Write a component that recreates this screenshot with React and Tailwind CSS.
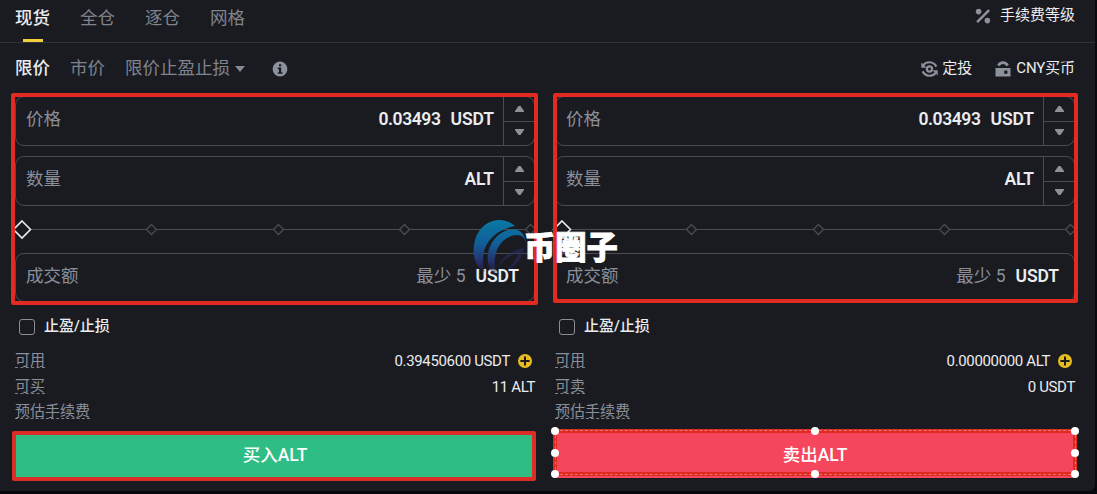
import { useState } from "react";

const tabs = ["现货", "全仓", "逐仓", "网格"];

const sides = [
  {
    id: "buy",
    price: "0.03493",
    available: "0.39450600 USDT",
    maxLabel: "可买",
    max: "11 ALT",
    action: "买入ALT",
  },
  {
    id: "sell",
    price: "0.03493",
    available: "0.00000000 ALT",
    maxLabel: "可卖",
    max: "0 USDT",
    action: "卖出ALT",
  },
];

function PercentIcon() {
  return (
    <svg width="16" height="16" viewBox="0 0 16 16" fill="#8b919d">
      <circle cx="3.6" cy="3.6" r="2.8" />
      <circle cx="12.4" cy="12.6" r="2.8" />
      <path d="M13.2 1.2 15 3 3 15 1.2 13.2z" />
    </svg>
  );
}

function CycleIcon() {
  return (
    <svg className="mt-[2px]" width="17" height="18" viewBox="0 0 17 18" fill="none" stroke="#8b919d">
      <circle cx="8.5" cy="9" r="2.6" strokeWidth="2.2" />
      <path d="M2.4 5C5.5 1.2 12.2 1 15.4 6.6" strokeWidth="2.2" />
      <path d="M14.6 13C11.5 16.8 4.8 17 1.6 11.4" strokeWidth="2.2" />
      <path d="M.3 2.6v5.2h5.2zM16.7 15.4v-5.2h-5.2z" fill="#8b919d" stroke="none" />
    </svg>
  );
}

function BagIcon() {
  return (
    <svg className="mt-[2px]" width="16" height="16" viewBox="0 0 16 16">
      <path d="M3.4 4.6C5.4.6 10.6.6 12.6 4.6" fill="none" stroke="#8b919d" strokeWidth="2.8" />
      <path d="M.5 7h15v8.5H.5z" fill="#8b919d" />
      <path d="M9.2 9.6h3.2v3.2H9.2z" fill="#1a1b20" />
    </svg>
  );
}

function InfoIcon() {
  return (
    <svg className="mt-[2px]" width="16" height="16" viewBox="0 0 16 16">
      <circle cx="8" cy="8" r="7.4" fill="#8b919d" />
      <path d="M7 3.2h2.2v2H7zM5.8 6.6h3.4v4.6h1.2v1.6H5.8v-1.6H7V8.2H5.8z" fill="#1a1b20" />
    </svg>
  );
}

function PlusIcon() {
  return (
    <svg className="mr-[3px] mt-px" width="14" height="14" viewBox="0 0 14 14">
      <circle cx="7" cy="7" r="7" fill="#e9bb22" />
      <path d="M7 2.4v9.2M2.4 7h9.2" stroke="#1a1b20" strokeWidth="2" />
    </svg>
  );
}

function Steps() {
  return (
    <div className="flex w-[31px] flex-col border-l border-[#4b4c51]">
      <button className="flex h-[25px] items-center justify-center border-b border-[#4b4c51]">
        <svg width="9" height="6" viewBox="0 0 9 6" fill="#8f9096">
          <path d="M0 6v-1L3.5 0h2L9 5v1z" />
        </svg>
      </button>
      <button className="flex flex-1 items-center justify-center pb-[3px]">
        <svg width="9" height="6" viewBox="0 0 9 6" fill="#8f9096">
          <path d="M0 0v1l3.5 5h2L9 1V0z" />
        </svg>
      </button>
    </div>
  );
}

function Field({ label, value, unit }) {
  return (
    <div className="flex h-[50px] rounded-[9px] border border-[#4b4c51] text-[17.5px]">
      <span className="flex flex-1 items-center pb-1 pl-[10px] text-[#8a8f9a]">{label}</span>
      <span className="flex items-center gap-[10px] pb-1 pr-[9px] font-semibold text-[#eaecef]">
        {value && <span className="tracking-[-0.4px]">{value}</span>}
        <span className="tracking-[-0.1px]">{unit}</span>
      </span>
      <Steps />
    </div>
  );
}

function Slider() {
  return (
    <svg className="-ml-[3px] block h-[47px] w-[526px]" viewBox="0 0 526 47" fill="#1a1b20">
      <path d="M18 23.5H518" stroke="#4b4c51" />
      {[139.5, 266.5, 392.5, 518.5].map((x) => (
        <path
          key={x}
          d="M0-5 5 0 0 5-5 0z"
          transform={`translate(${x} 23.5)`}
          stroke="#4b4c51"
          strokeWidth="1.3"
        />
      ))}
      <path d="M10 15 18.5 23.5 10 32 1.5 23.5z" stroke="#eaecef" strokeWidth="1.6" />
    </svg>
  );
}

function InfoRow({ label, children }) {
  return (
    <div className="flex h-[25.5px] items-center justify-between text-[15px]">
      <span className="-mt-px h-[16px] border-b border-dashed border-[#7c818c] leading-[17px] text-[#8a8f9a]">
        {label}
      </span>
      <span className="flex items-center gap-2 tracking-[-0.35px] text-[#eaecef]">{children}</span>
    </div>
  );
}

function Handle({ className }) {
  return <i className={`absolute size-2 rounded-full bg-white ${className}`} />;
}

function BuyFrames() {
  return (
    <>
      <div className="absolute -left-[4px] -top-[3px] h-[212px] w-[527px] rounded-[2px] border-4 border-[#e02a22]" />
      <div className="absolute -left-[3px] top-[335px] h-[50px] w-[524px] rounded-[2px] border-4 border-[#dc2e25]" />
    </>
  );
}

function SellFrames() {
  return (
    <>
      <div className="absolute -left-[2px] -top-[3px] h-[210px] w-[525px] rounded-[2px] border-4 border-[#e02a22]" />
      <div className="absolute -left-[2px] top-[333px] h-[47px] w-[524px] border-4 border-[#e02a22]" />
      {/* selection outline with its eight handles */}
      <div className="absolute left-0 top-[334px] h-[45px] w-[521px] border border-dashed border-[#dc7771]">
        <Handle className="-left-[5px] -top-[4px]" />
        <Handle className="-top-[4px] left-[255px]" />
        <Handle className="-right-[4px] -top-[4px]" />
        <Handle className="-left-[5px] top-[18px]" />
        <Handle className="-right-[4px] top-[18px]" />
        <Handle className="-bottom-[4px] -left-[5px]" />
        <Handle className="-bottom-[4px] left-[255px]" />
        <Handle className="-bottom-[4px] -right-[4px]" />
      </div>
    </>
  );
}

function OrderForm({ side }) {
  const [tpsl, setTpsl] = useState(false);
  const buy = side.id === "buy";

  return (
    <section className="relative">
      <Field label="价格" value={side.price} unit="USDT" />
      <div className="h-[10px]" />
      <Field label="数量" unit="ALT" />
      <Slider />
      <div className="flex h-[49px] items-center rounded-[9px] border border-[#4b4c51] px-[10px] pb-[3px] text-[17.5px]">
        <span className="flex-1 text-[#8a8f9a]">成交额</span>
        <span className="mr-[10px] text-[#8a8f9a]">最少 5</span>
        <span className="mr-[5px] font-semibold tracking-[-0.1px] text-[#eaecef]">USDT</span>
      </div>

      <label className="ml-1 mt-[13px] flex h-[23px] items-center text-[15px] font-medium text-[#eaecef]">
        <input
          type="checkbox"
          checked={tpsl}
          onChange={() => setTpsl(!tpsl)}
          className="mr-[9px] size-4 appearance-none rounded-[3px] border border-[#8b8d94]"
        />
        止盈/止损
      </label>

      <div className="mt-[10px]">
        <InfoRow label="可用">
          {side.available}
          <PlusIcon />
        </InfoRow>
        <InfoRow label={side.maxLabel}>
          <span className="pt-[2px]">{side.max}</span>
        </InfoRow>
        <InfoRow label="预估手续费" />
      </div>

      <button
        className={`mt-[7px] block h-[46px] w-full rounded-[4px] pt-[2px] text-[17.5px] font-medium text-white ${
          buy ? "bg-[#2ebd85]" : "bg-[#f6465d]"
        }`}
      >
        {side.action}
      </button>
      {buy ? <BuyFrames /> : <SellFrames />}
    </section>
  );
}

function Watermark() {
  return (
    <div className="absolute left-[473px] top-[217px] flex items-center">
      <svg width="53" height="60" viewBox="0 0 53 60">
        <defs>
          <linearGradient id="swirl" gradientUnits="userSpaceOnUse" x1="0" y1="0" x2="0" y2="58">
            <stop offset="0" stopColor="#087ca5" />
            <stop offset="0.45" stopColor="#125d96" />
            <stop offset="0.75" stopColor="#27306b" />
            <stop offset="1" stopColor="#241f4a" stopOpacity="0.1" />
          </linearGradient>
        </defs>
        <path d="M42 8C30-3 8 1 2 22-2 38 3 50 12 54 6 38 12 14 42 8z" fill="url(#swirl)" />
        <path
          d="M53 25C52 14 44 9 35 12 21 16 11 32 16 49 18 55 21 57 25 58 16 40 26 18 44 17 49 17 52 20 53 25z"
          fill="url(#swirl)"
        />
        <path d="M51 30C38 32 28 40 25 49 31 41 39 36 46 35 43 42 39 47 34 52 44 47 50 40 51 30z" fill="#272d62" opacity="0.6" />
      </svg>
      <span className="-ml-[2px] pt-[2px] text-[31.3px] font-black leading-[60px] text-white [-webkit-text-stroke:0.8px_white]">
        币圈子
      </span>
    </div>
  );
}

export default function App() {
  const [tab, setTab] = useState("现货");

  return (
    <div className="h-[494px] w-[1097px] overflow-hidden bg-[#08090c] font-[Roboto,'Noto_Sans_CJK_SC',sans-serif]">
      <div className="relative h-[491px] w-[1095px] rounded-br-[6px] bg-[#1a1b20]">
        <header className="flex h-[43px] justify-between border-b border-[#303238] pl-[15px] pr-5">
          <nav className="flex gap-[30px] text-[17.5px]">
            {tabs.map((t) => (
              <button
                key={t}
                onClick={() => setTab(t)}
                className={`flex h-[42px] flex-col items-center justify-between ${
                  t === tab ? "font-medium text-[#eaecef]" : "text-[#7e838e]"
                }`}
              >
                <span className="leading-[37px]">{t}</span>
                {t === tab && <span className="h-[3px] w-5 bg-[#f0d03c]" />}
              </button>
            ))}
          </nav>
          <a className="flex h-[31px] items-center gap-[9px] text-[15px] text-[#eaecef]">
            <PercentIcon />
            手续费等级
          </a>
        </header>

        <div className="flex h-[53px] items-center justify-between pb-[3px] pl-[15px] pr-5">
          <div className="flex items-center text-[17.5px] text-[#7e838e]">
            <span className="mr-5 font-medium text-[#eaecef]">限价</span>
            <span className="mr-5">市价</span>
            <span>限价止盈止损</span>
            <svg className="ml-[5px] mr-[27px] mt-px" width="10" height="6" viewBox="0 0 10 6" fill="#848994">
              <path d="M0 0h10L5 6z" />
            </svg>
            <InfoIcon />
          </div>
          <div className="flex items-center text-[15px] text-[#eaecef]">
            <CycleIcon />
            <span className="ml-1 mr-[23px]">定投</span>
            <BagIcon />
            <span className="ml-[5px] tracking-[-0.1px]">CNY买币</span>
          </div>
        </div>

        <main className="grid grid-cols-2 gap-5 pl-[15px] pr-5">
          {sides.map((s) => (
            <OrderForm key={s.id} side={s} />
          ))}
        </main>

        <Watermark />
      </div>
    </div>
  );
}
